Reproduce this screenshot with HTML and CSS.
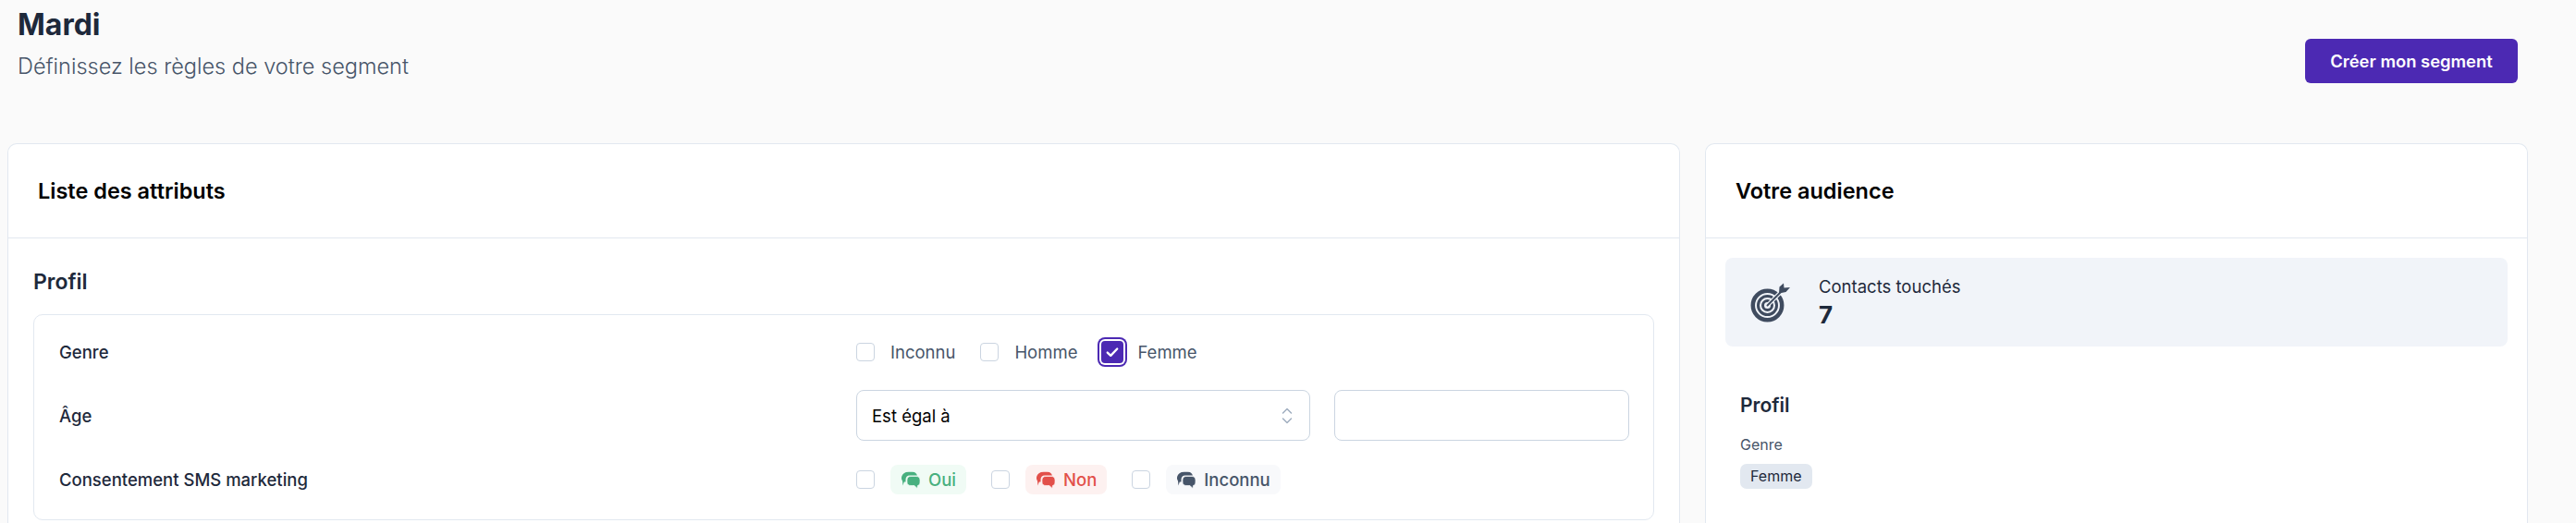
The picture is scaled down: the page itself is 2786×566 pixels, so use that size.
FILE: index.html
```html
<!DOCTYPE html>
<html lang="fr">
<head>
  <meta charset="UTF-8">
  <meta name="viewport" content="width=device-width, initial-scale=1.0">
  <title>Mardi - Segment</title>
  <link rel="stylesheet" href="styles.css">
</head>
<body>
  <!-- Titre de page -->
  <header class="page-header">
    <div>
      <h1>Mardi</h1>
      <p>Définissez les règles de votre segment</p>
    </div>
    <button class="btn-primary" type="button">Créer mon segment</button>
  </header>

  <main class="columns">
    <!-- Attributs -->
    <section class="panel">
      <h2 class="panel-title">Liste des attributs</h2>
      <div class="panel-body">
        <h3 class="group-title">Profil</h3>
        <div class="attributes">
          <div class="attr-row">
            <span class="attr-label">Genre</span>
            <div class="choices">
              <label class="choice"><span class="box"></span>Inconnu</label>
              <label class="choice"><span class="box"></span>Homme</label>
              <label class="choice choice-on">
                <span class="box box-on">
                  <svg viewBox="0 0 12 12" width="14" height="14"><path d="M1.500 6.500 4.500 9.300 10.500 3" fill="none" stroke="#fff" stroke-width="2" stroke-linecap="round" stroke-linejoin="round"/></svg>
                </span>Femme
              </label>
            </div>
          </div>
          <div class="attr-row">
            <span class="attr-label">Âge</span>
            <div class="age-fields">
              <div class="select">
                <span>Est égal à</span>
                <svg viewBox="0 0 12 20" width="12" height="20"><path d="M1.500 7 6 2.500 10.500 7M1.500 13 6 17.500 10.500 13" fill="none" stroke="#a0aec0" stroke-width="1.500" stroke-linecap="round" stroke-linejoin="round"/></svg>
              </div>
              <input class="text-input" type="text" aria-label="Âge">
            </div>
          </div>
          <div class="attr-row">
            <span class="attr-label">Consentement SMS marketing</span>
            <div class="choices">
              <label class="choice"><span class="box"></span>
                <span class="pill pill-green">
                  <svg class="bubbles" viewBox="0 0 20 18"><use href="#bubbles"/></svg>Oui
                </span>
              </label>
              <label class="choice"><span class="box"></span>
                <span class="pill pill-red">
                  <svg class="bubbles" viewBox="0 0 20 18"><use href="#bubbles"/></svg>Non
                </span>
              </label>
              <label class="choice"><span class="box"></span>
                <span class="pill pill-grey">
                  <svg class="bubbles" viewBox="0 0 20 18"><use href="#bubbles"/></svg>Inconnu
                </span>
              </label>
            </div>
          </div>
        </div>
      </div>
    </section>

    <!-- Audience -->
    <aside class="panel">
      <h2 class="panel-title">Votre audience</h2>
      <div class="audience-body">
        <div class="stat">
          <svg class="target" viewBox="0 0 44 44" width="44" height="44">
            <circle cx="18.500" cy="25.500" r="15.700" fill="none" stroke="#3f4b5f" stroke-width="4.500"/>
            <circle cx="18.500" cy="25.500" r="10" fill="none" stroke="#3f4b5f" stroke-width="3"/>
            <circle cx="18.500" cy="25.500" r="5" fill="none" stroke="#3f4b5f" stroke-width="3"/>
            <path d="M18.500 25.500 34 10" stroke="#f1f5f9" stroke-width="4.500"/>
            <path d="M18.500 25.500 34 10" stroke="#3f4b5f" stroke-width="2" stroke-linecap="round"/>
            <path d="M31 12.500 31.500 5.500 36 1.500 36.500 6.500 43 6 38.500 11Z" fill="#3f4b5f"/>
          </svg>
          <div>
            <div class="stat-label">Contacts touchés</div>
            <div class="stat-value">7</div>
          </div>
        </div>
        <div class="summary">
          <h3 class="summary-title">Profil</h3>
          <div class="summary-label">Genre</div>
          <span class="tag">Femme</span>
        </div>
      </div>
    </aside>
  </main>

  <!-- Icone partagee -->
  <svg class="sprite" aria-hidden="true">
    <symbol id="bubbles" viewBox="0 0 20 18">
      <path d="M8 0h3c3 0 5 1.500 6 4H9C6 4 4.500 6 4.500 8.500V11c-.6.100-1.200.100-1.700 0L1.500 15 1 10C.3 9 0 8 0 7 0 3 3.500 0 8 0Z" fill="currentColor"/>
      <path class="bubble-front" d="M10 5h6c2.500 0 4 1.500 4 4v2.500c0 2-1 3-2.500 3.500L17 18l-3-3h-4c-2.500 0-4-1.500-4-3.500V9c0-2.500 1.500-4 4-4Z" fill="currentColor"/>
    </symbol>
  </svg>
</body>
</html>
```
FILE: styles.css
```css
* {
  margin: 0;
  padding: 0;
  box-sizing: border-box;
}
body {
  font-family: 'Inter', sans-serif;
  background-color: #fafafa;
  color: #1e293b;
}

/* Titre de page */
.page-header {
  display: flex;
  justify-content: space-between;
  align-items: flex-start;
  height: 155px;
  padding: 9px 63px 0 19px;
}
.page-header h1 {
  font-size: 32px;
  line-height: 36px;
  font-weight: 700;
}
.page-header p {
  font-size: 23.5px;
  line-height: 30px;
  font-weight: 300;
  color: #475569;
  margin-top: 12px;
}
.btn-primary {
  width: 230px;
  height: 48px;
  background: #4c29b3;
  border: none;
  border-radius: 6px;
  color: #fff;
  font: 600 18.400px 'Inter', sans-serif;
  margin-top: 33px;
}

/* Colonnes */
.columns {
  display: grid;
  grid-template-columns: 1809px 890px;
  gap: 27px;
  padding-left: 8px;
}
.panel {
  background: #fff;
  border: 1px solid #e2e8f0;
  border-bottom: none;
  border-radius: 10px 10px 0 0;
  height: 411px;
}
.panel-title {
  height: 102px;
  display: flex;
  align-items: center;
  padding-left: 32px;
  font-size: 23.500px;
  font-weight: 600;
  color: #000;
  border-bottom: 1px solid #e2e8f0;
}
.panel-body {
  padding: 33px 27px 0 27px;
}
.group-title {
  font-size: 23px;
  line-height: 28px;
  font-weight: 600;
}

/* Lignes d'attributs */
.attributes {
  margin-top: 21px;
  border: 1px solid #e2e8f0;
  border-radius: 10px;
  padding: 24px 27px 27px;
  display: flex;
  flex-direction: column;
  gap: 26px;
}
.attr-row {
  display: grid;
  grid-template-columns: 862px 1fr;
  align-items: center;
  min-height: 31px;
}
.attr-label {
  font-size: 18.500px;
  font-weight: 500;
}
.choices {
  display: flex;
  align-items: center;
  gap: 27px;
}
.choice {
  display: flex;
  align-items: center;
  gap: 17px;
  font-size: 18.500px;
  color: #475569;
}
.box {
  width: 20px;
  height: 20px;
  border: 1px solid #cbd5e1;
  border-radius: 4px;
  background: #fff;
  display: flex;
  align-items: center;
  justify-content: center;
}
.box-on {
  width: 24px;
  height: 24px;
  background: #4c29b3;
  border: none;
  box-shadow: 0 0 0 2px #fff, 0 0 0 4px #4c29b3;
}
.choice-on {
  margin-left: -1px;
  gap: 15px;
}

/* Age */
.age-fields {
  display: flex;
  gap: 26px;
}
.select {
  width: 491px;
  height: 55px;
  border: 1px solid #cbd5e1;
  border-radius: 8px;
  display: flex;
  align-items: center;
  justify-content: space-between;
  padding: 0 18px 0 16px;
  font-size: 18.500px;
  color: #000;
}
.text-input {
  width: 319px;
  height: 55px;
  border: 1px solid #cbd5e1;
  border-radius: 8px;
  background: #fff;
}

/* Pastilles */
.pill {
  --pill-bg: #f8f9fb;
  display: flex;
  align-items: center;
  gap: 9px;
  height: 32px;
  padding: 0 11px 0 12px;
  border-radius: 8px;
  font-size: 18.500px;
  font-weight: 500;
  background: var(--pill-bg);
}
.bubbles {
  width: 20px;
  height: 19px;
}
.bubble-front {
  stroke: var(--pill-bg);
  stroke-width: .7;
}
.pill-green {
  --pill-bg: #f0fbf5;
  color: #48b07f;
}
.pill-red {
  --pill-bg: #fdf1f0;
  color: #e2504a;
}
.pill-grey {
  color: #475569;
}
.sprite {
  display: none;
}

/* Audience */
.audience-body {
  padding: 21px 21px 0;
}
.stat {
  height: 96px;
  background: #f1f4f9;
  border-radius: 8px;
  display: flex;
  align-items: center;
  gap: 30px;
  padding-left: 27px;
}
.stat-label {
  font-size: 18.500px;
  line-height: 24px;
}
.stat-value {
  font-size: 26px;
  line-height: 32px;
  font-weight: 700;
  margin-top: 3px;
}
.summary {
  padding: 50px 16px 0;
}
.summary-title {
  font-size: 21px;
  line-height: 28px;
  font-weight: 600;
}
.summary-label {
  font-size: 16px;
  line-height: 20px;
  color: #475569;
  margin-top: 18px;
}
.tag {
  display: block;
  width: fit-content;
  margin-top: 11px;
  padding: 0 11px;
  height: 27px;
  line-height: 27px;
  background: #e2e8f0;
  border-radius: 7px;
  font-size: 16px;
}
```
